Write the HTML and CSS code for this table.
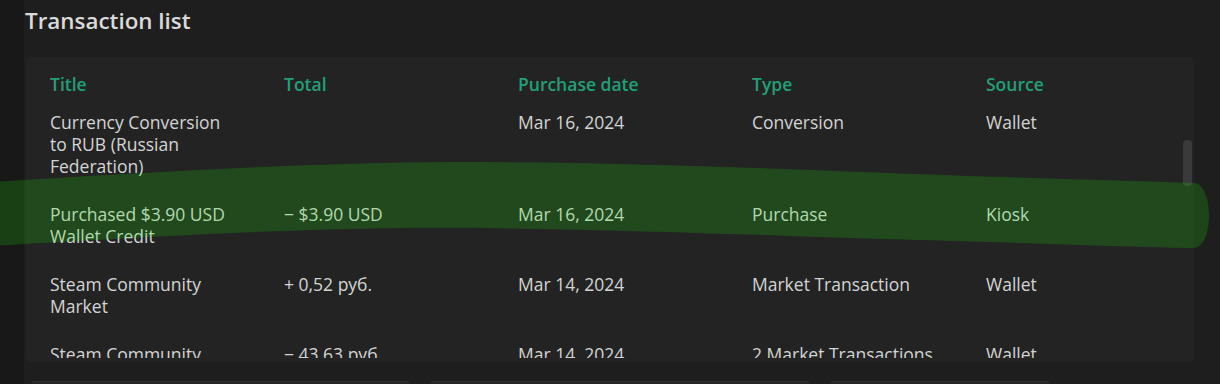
FILE: index.html
```html
<!DOCTYPE html>
<html lang="en">
<head>
<meta charset="utf-8">
<title>Transaction list</title>
<link rel="stylesheet" href="styles.css">
</head>
<body>
<div class="page">
  <h2 class="heading">Transaction list</h2>
  <div class="card">
    <div class="table">
      <div class="row head">
        <div class="cell">Title</div>
        <div class="cell">Total</div>
        <div class="cell">Purchase date</div>
        <div class="cell">Type</div>
        <div class="cell">Source</div>
      </div>
      <div class="row">
        <div class="cell">Currency Conversion to RUB (Russian Federation)</div>
        <div class="cell"></div>
        <div class="cell">Mar 16, 2024</div>
        <div class="cell">Conversion</div>
        <div class="cell">Wallet</div>
      </div>
      <div class="row">
        <div class="cell">Purchased $3.90 USD Wallet Credit</div>
        <div class="cell">− $3.90 USD</div>
        <div class="cell">Mar 16, 2024</div>
        <div class="cell">Purchase</div>
        <div class="cell">Kiosk</div>
      </div>
      <div class="row">
        <div class="cell">Steam Community Market</div>
        <div class="cell">+ 0,52 руб.</div>
        <div class="cell">Mar 14, 2024</div>
        <div class="cell">Market Transaction</div>
        <div class="cell">Wallet</div>
      </div>
      <div class="row">
        <div class="cell">Steam Community Market</div>
        <div class="cell">− 43,63 руб.</div>
        <div class="cell">Mar 14, 2024</div>
        <div class="cell">2 Market Transactions</div>
        <div class="cell">Wallet</div>
      </div>
    </div>
    <div class="thumb"></div>
  </div>
  <div class="next">
    <div class="box b1"></div>
    <div class="box b2"></div>
    <div class="box b3"></div>
  </div>
</div>
<svg class="marker" width="1220" height="384" viewBox="0 0 1220 384" aria-hidden="true">
  <path d="M-10 182 C 150 172, 300 163, 450 162 C 650 162, 800 170, 1000 177 C 1100 180, 1172 182, 1194 183 C 1214 184, 1214 247, 1194 248 C 1100 246, 1000 242, 850 238 C 650 231, 500 227, 400 228 C 250 230, 100 240, -10 246 Z" fill="rgba(28,240,6,0.19)"/>
</svg>
</body>
</html>
```
FILE: styles.css
```css
html, body {
  margin: 0;
  padding: 0;
}
body {
  background: #181818;
  width: 1220px;
  height: 384px;
  overflow: hidden;
  font-family: "Open Sans", "Noto Sans", sans-serif;
  position: relative;
}
.page {
  margin-left: 24px;
  background: #1e1e1e;
  height: 384px;
  padding-top: 6px;
  box-sizing: border-box;
}
.heading {
  margin: 0 0 0 1px;
  font-size: 22.4px;
  line-height: 30px;
  font-weight: 600;
  color: #dadada;
}
.card {
  position: relative;
  margin: 21px 0 0 2px;
  width: 1168px;
  height: 305px;
  background: #232323;
  border-radius: 4px;
  box-sizing: border-box;
  padding: 16px 0 4px 24px;
}
.table {
  height: 285px;
  overflow: hidden;
}
.row {
  display: grid;
  grid-template-columns: repeat(5, 234px);
  padding: 13px 0 13px;
}
.row.head {
  padding: 0 0 3px;
}
.cell {
  padding-right: 52px;
  font-size: 17.5px;
  line-height: 22px;
  color: #d4d4d4;
}
.head .cell {
  color: #21a078;
  font-weight: 600;
}
.thumb {
  position: absolute;
  left: 1157px;
  top: 83px;
  width: 9px;
  height: 46px;
  border-radius: 4px;
  background: #3a3a3a;
}
.next {
  display: flex;
  gap: 20px;
  margin: 19px 0 0 8px;
}
.box {
  height: 20px;
  background: #252525;
  border-top: 1px solid #2e2e2e;
  border-radius: 2px;
}
.b1 { width: 378px; }
.b2 { width: 380px; }
.b3 { width: 220px; }
.marker {
  position: absolute;
  left: 0;
  top: 0;
  pointer-events: none;
}
```
